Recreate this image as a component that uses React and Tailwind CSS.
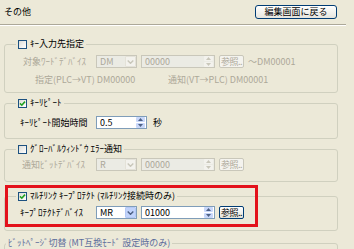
import React from 'react';

function Check({ checked }) {
    return (
        <span className="w-[9px] h-[9px] border border-[#1c5180] bg-gradient-to-br from-[#dcdcd7] to-white flex items-center justify-center">
            {checked && (
                <svg width="7" height="7" viewBox="0 0 7 7">
                    <path d="M1 3.4 L2.8 5.2 L6 1.6" stroke="#21a121" strokeWidth="1.6" fill="none" />
                </svg>
            )}
        </span>
    );
}

function Select({ value, disabled }) {
    return (
        <div className={`w-[41px] h-[13px] border flex items-center ${disabled ? 'border-[#c9c7ba] bg-[#ebebe4] text-[#aca899]' : 'border-[#7f9db9] bg-white text-black'}`}>
            <span className="flex-1 pl-[3px] leading-none">{value}</span>
            <span className={`w-[11px] h-[11px] rounded-[1px] border flex items-center justify-center ${disabled ? 'bg-[#f3f2ed] border-[#e4e2d8]' : 'bg-[#c1d3fb] border-[#b4c8f5]'}`}>
                <svg width="7" height="4" viewBox="0 0 7 4">
                    <path d="M0.7 0.5 L3.5 3.3 L6.3 0.5" stroke={disabled ? '#c9c7ba' : '#4d6185'} strokeWidth="1.4" fill="none" />
                </svg>
            </span>
        </div>
    );
}

function Spin({ value, disabled, w }) {
    const arrow = disabled ? '#c9c7ba' : '#4d6185';
    return (
        <div className={`${w} h-[13px] ml-[4px] border flex items-center ${disabled ? 'border-[#c9c7ba] bg-[#ebebe4] text-[#aca899]' : 'border-[#7f9db9] bg-white text-black'}`}>
            <span className="flex-1 pl-[3px] leading-none">{value}</span>
            <span className="w-[9px] h-[11px] flex flex-col gap-[1px] mr-[1px]">
                <span className={`flex-1 rounded-[1px] flex items-center justify-center ${disabled ? 'bg-[#f3f2ed]' : 'bg-[#c8d7fa]'}`}>
                    <svg width="5" height="3" viewBox="0 0 5 3"><path d="M0 3 L2.5 0 L5 3 Z" fill={arrow} /></svg>
                </span>
                <span className={`flex-1 rounded-[1px] flex items-center justify-center ${disabled ? 'bg-[#f3f2ed]' : 'bg-[#c8d7fa]'}`}>
                    <svg width="5" height="3" viewBox="0 0 5 3"><path d="M0 0 L2.5 3 L5 0 Z" fill={arrow} /></svg>
                </span>
            </span>
        </div>
    );
}

function RefButton({ disabled }) {
    return (
        <div className={`w-[25px] h-[13px] ml-[4px] rounded-[2px] border flex items-center justify-center tracking-[-0.5px] ${disabled ? 'border-[#c9c7ba] text-[#aca899] bg-[#f4f3ee]' : 'border-[#003c74] text-black bg-gradient-to-b from-white to-[#e3e2da]'}`}>
            参照..
        </div>
    );
}

function Group({ legend, children, className = '' }) {
    return (
        <fieldset className={`border border-[#d0d0bf] rounded-[3px] ${className}`}>
            <legend className="ml-[11px] px-[2px]">
                <span className="flex items-center gap-[3px] h-[12px]">{legend}</span>
            </legend>
            {children}
        </fieldset>
    );
}

export default function App() {
    return (
        <div className="w-[354px] h-[249px] overflow-hidden bg-[#ece9d8] text-[9px] leading-[12px] text-black font-['Noto_Sans_CJK_JP',sans-serif]">
            {/* header */}
            <div className="h-[24px] flex items-center justify-between pl-[4px] pr-[17px]">
                <span>その他</span>
                <div className="w-[82px] h-[14px] rounded-[3px] border border-[#003c74] bg-gradient-to-b from-white to-[#e6e5de] flex items-center justify-center">
                    編集画面に戻る
                </div>
            </div>
            <div className="w-[346px] border-t border-[#aca899] border-b border-b-white" />

            <div className="w-[334px] ml-[4px] mt-[12px] flex flex-col">
                {/* key input */}
                <Group legend={<><Check /><span>ｷｰ入力先指定</span></>}>
                    <div className="flex items-center mt-[5px] pl-[18px] text-[#aca899]">
                        <span className="w-[73px]">対象ﾜｰﾄﾞﾃﾞﾊﾞｲｽ</span>
                        <Select value="DM" disabled />
                        <Spin value="00000" disabled w="w-[74px]" />
                        <RefButton disabled />
                        <span className="ml-[4px]">～DM00001</span>
                    </div>
                    <div className="flex mt-[6px] mb-[6px] text-[#aca899]">
                        <span className="pl-[30px] w-[163px]">指定(PLC→VT) DM00000</span>
                        <span>通知(VT→PLC) DM00001</span>
                    </div>
                </Group>

                {/* key repeat */}
                <Group className="mt-[4px]" legend={<><Check checked /><span>ｷｰﾘﾋﾟｰﾄ</span></>}>
                    <div className="flex items-center mt-[7px] mb-[9px] pl-[15px]">
                        <span className="w-[76px]">ｷｰﾘﾋﾟｰﾄ開始時間</span>
                        <div className="-ml-[4px]">
                            <Spin value="0.5" w="w-[51px]" />
                        </div>
                        <span className="ml-[6px]">秒</span>
                    </div>
                </Group>

                {/* global window error */}
                <Group className="mt-[4px]" legend={<><Check /><span>ｸﾞﾛｰﾊﾞﾙｳｨﾝﾄﾞｳ ｴﾗｰ通知</span></>}>
                    <div className="flex items-center mt-[3px] mb-[10px] pl-[17px] text-[#aca899]">
                        <span className="w-[74px]">通知ﾋﾞｯﾄﾃﾞﾊﾞｲｽ</span>
                        <Select value="R" disabled />
                        <Spin value="00000" disabled w="w-[74px]" />
                        <RefButton disabled />
                    </div>
                </Group>

                {/* multilink key protect */}
                <div className="relative mt-[8px]">
                    <Group legend={<><Check checked /><span>ﾏﾙﾁﾘﾝｸ ｷｰﾌﾟﾛﾃｸﾄ (ﾏﾙﾁﾘﾝｸ接続時のみ)</span></>}>
                        <div className="flex items-center mt-[4px] mb-[11px] pl-[15px]">
                            <span className="w-[76px]">ｷｰﾌﾟﾛﾃｸﾄﾃﾞﾊﾞｲｽ</span>
                            <Select value="MR" />
                            <Spin value="01000" w="w-[74px]" />
                            <RefButton />
                        </div>
                    </Group>
                    <div className="absolute -top-[5px] left-[1px] w-[253px] h-[42px] border-[3px] border-[#e3121b]" />
                </div>

                {/* bit page */}
                <fieldset className="mt-[6px] border border-[#d0d0bf] rounded-[3px] h-[30px]">
                    <legend className="ml-[1px] px-[2px] text-[#5d6d9c]">ﾋﾞｯﾄﾍﾟｰｼﾞ切替 (MT互換ﾓｰﾄﾞ 設定時のみ)</legend>
                </fieldset>
            </div>
        </div>
    );
}
